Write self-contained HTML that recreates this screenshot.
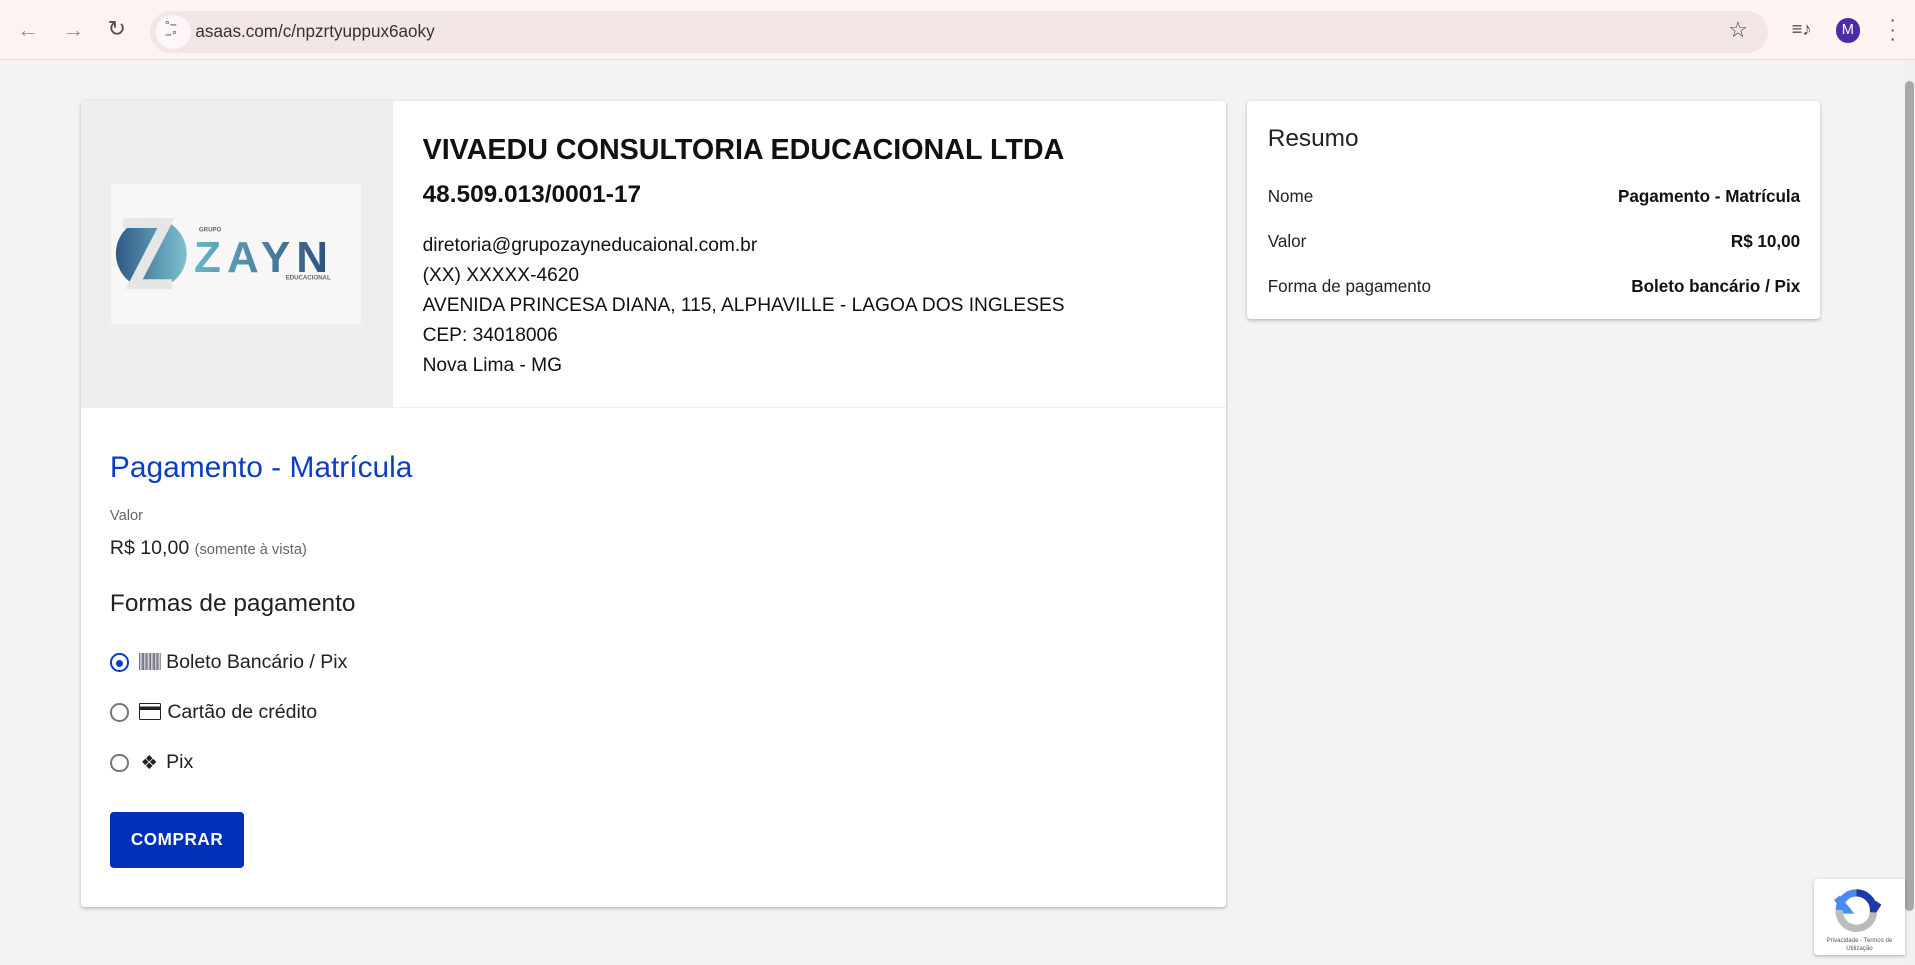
<!DOCTYPE html>
<html><head><meta charset="utf-8"><style>
html,body{margin:0;padding:0;width:1915px;height:965px;overflow:hidden;background:#f3f3f3}
#w{zoom:1.2213;width:1568px;height:790px;position:relative;font-family:"Liberation Sans",sans-serif;color:#222}
.a{position:absolute}
.top{left:0;top:0;width:1568px;height:48px;background:#fdf4f2;border-bottom:1px solid #f4ddd6}
.url{left:123px;top:9px;width:1325px;height:34px;border-radius:17px;background:#f3e6e6}
.card{background:#fff;box-shadow:0 1px 3px rgba(0,0,0,.25);border-radius:3px}
.t{white-space:nowrap}
</style></head><body><div id="w">
<div class="a" style="left:0;top:0;width:1568px;height:4px;background:#fbdcd3"></div>
<div class="a top"></div>
<div class="a" style="left:14px;top:14px;color:#a09090;font-size:18px">&#8592;</div>
<div class="a" style="left:51px;top:14px;color:#a09090;font-size:18px">&#8594;</div>
<div class="a" style="left:88px;top:13px;color:#5a4a4a;font-size:18px">&#8635;</div>
<div class="a url"></div>
<div class="a" style="left:128px;top:12px;width:28px;height:28px;border-radius:14px;background:#fdf8f7"></div>
<div class="a t" style="left:135px;top:17px;font-size:10px;color:#444;line-height:8px">°−<br>−°</div>
<div class="a t" style="left:160px;top:18px;font-size:14px;color:#333">asaas.com/c/npzrtyuppux6aoky</div>
<div class="a" style="left:1415px;top:14px;font-size:18px;color:#444">☆</div>
<div class="a" style="left:1467px;top:15px;font-size:15px;color:#5a4a4a">≡♪</div>
<div class="a" style="left:1503px;top:15px;width:20px;height:20px;border-radius:10px;background:#4b2ba8;color:#fff;font-size:12px;text-align:center;line-height:20px">M</div>
<div class="a" style="left:1547px;top:13px;font-size:16px;color:#5a4a4a;line-height:8px">·<br>·<br>·</div>
<div class="a" style="left:1558px;top:49px;width:10px;height:741px;background:#f1f1f1"></div>
<div class="a" style="left:1560px;top:66px;width:7px;height:680px;border-radius:4px;background:#a8a8a8"></div>

<div class="a card" style="left:66px;top:83px;width:938px;height:660px"></div>
<div class="a" style="left:66px;top:83px;width:256px;height:250px;background:#eeeeee"></div>
<div class="a" style="left:66px;top:333px;width:938px;height:1px;background:#f0f0f0"></div>
<div class="a" style="left:91px;top:151px;width:205px;height:114px;background:#f7f7f7"></div>
<svg class="a" style="left:91px;top:151px" width="205" height="114">
<defs><linearGradient id="g" x1="0" x2="1"><stop offset="0" stop-color="#2d5a86"/><stop offset="1" stop-color="#7fc1d0"/></linearGradient>
<linearGradient id="h" x1="0" x2="1"><stop offset="0" stop-color="#6ab4c8"/><stop offset="1" stop-color="#2b4e7a"/></linearGradient></defs>
<circle cx="33" cy="57" r="29" fill="url(#g)"/>
<path d="M10 28 H52 L26 78 H50 V86 H12 L38 36 H10Z" fill="#e6e6e6"/>
<text x="72" y="39" font-size="5" fill="#666" font-family="Liberation Sans" font-weight="bold">GRUPO</text>
<text x="68" y="72" font-size="36" fill="url(#h)" font-family="Liberation Sans" font-weight="bold" letter-spacing="5">ZAYN</text>
<text x="143" y="78" font-size="5" fill="#666" font-family="Liberation Sans" font-weight="bold">EDUCACIONAL</text>
</svg>
<div class="a t" style="left:346px;top:110px;font-size:23.5px;font-weight:bold;color:#111">VIVAEDU CONSULTORIA EDUCACIONAL LTDA</div>
<div class="a t" style="left:346px;top:148px;font-size:20px;font-weight:bold;color:#111">48.509.013/0001-17</div>
<div class="a t" style="left:346px;top:189px;font-size:15.7px;line-height:24.6px;color:#111">diretoria@grupozayneducaional.com.br<br>(XX) XXXXX-4620<br>AVENIDA PRINCESA DIANA, 115, ALPHAVILLE - LAGOA DOS INGLESES<br>CEP: 34018006<br>Nova Lima - MG</div>

<div class="a t" style="left:90px;top:369px;font-size:24.5px;color:#0b3fc1">Pagamento - Matrícula</div>
<div class="a t" style="left:90px;top:416px;font-size:12px;color:#666">Valor</div>
<div class="a t" style="left:90px;top:440px;font-size:16px;color:#222">R$ 10,00 <span style="font-size:12px;color:#666">(somente à vista)</span></div>
<div class="a t" style="left:90px;top:483px;font-size:20px;color:#222">Formas de pagamento</div>

<div class="a" style="left:90px;top:535px;width:12px;height:12px;border:2px solid #0b3fc1;border-radius:50%"></div>
<div class="a" style="left:95px;top:540px;width:6px;height:6px;background:#0b3fc1;border-radius:50%"></div>
<div class="a" style="left:90px;top:576px;width:12px;height:12px;border:2px solid #777;border-radius:50%"></div>
<div class="a" style="left:90px;top:617px;width:12px;height:12px;border:2px solid #777;border-radius:50%"></div>
<div class="a" style="left:114px;top:535px;width:18px;height:14px;background:repeating-linear-gradient(90deg,#777 0 1px,#ccd 1px 2px,#99a 2px 3px)"></div>
<div class="a t" style="left:136px;top:533px;font-size:16px;color:#222">Boleto Bancário / Pix</div>
<div class="a" style="left:114px;top:576px;width:16px;height:12px;border:1.5px solid #222;border-radius:1px;background:linear-gradient(#fff 0 2px,#222 2px 5px,#fff 5px)"></div>
<div class="a t" style="left:137px;top:574px;font-size:16px;color:#222">Cartão de crédito</div>
<div class="a" style="left:115px;top:615px;font-size:16px;color:#222">❖</div>
<div class="a t" style="left:136px;top:615px;font-size:16px;color:#222">Pix</div>
<div class="a" style="left:90px;top:665px;width:110px;height:46px;background:#0030b9;border-radius:3px;color:#fff;font-weight:bold;font-size:14px;text-align:center;line-height:46px;letter-spacing:.5px">COMPRAR</div>

<div class="a card" style="left:1021px;top:83px;width:469px;height:178px"></div>
<div class="a t" style="left:1038px;top:102px;font-size:20px;color:#222">Resumo</div>
<div class="a t" style="left:1038px;top:153px;font-size:14px;color:#222">Nome</div>
<div class="a t" style="left:1038px;top:190px;font-size:14px;color:#222">Valor</div>
<div class="a t" style="left:1038px;top:227px;font-size:14px;color:#222">Forma de pagamento</div>
<div class="a t" style="right:94px;top:153px;font-size:14px;font-weight:bold;color:#111">Pagamento - Matrícula</div>
<div class="a t" style="right:94px;top:190px;font-size:14px;font-weight:bold;color:#111">R$ 10,00</div>
<div class="a t" style="right:94px;top:227px;font-size:14px;font-weight:bold;color:#111">Boleto bancário / Pix</div>

<div class="a card" style="left:1485px;top:720px;width:75px;height:62px;border-radius:3px 0 0 3px"></div>
<svg class="a" style="left:1500px;top:727px" width="40" height="38"><path d="M20 4 A14 14 0 0 0 6 18 H12 L4 8" fill="none" stroke="#4a8af4" stroke-width="6"/><path d="M20 4 A14 14 0 0 1 34 18 L38 12" fill="none" stroke="#1c3aa9" stroke-width="6"/><path d="M6 18 A14 14 0 0 0 34 20" fill="none" stroke="#bbb" stroke-width="6"/></svg>
<div class="a" style="left:1490px;top:767px;width:65px;font-size:5px;color:#555;text-align:center;line-height:7px">Privacidade - Termos de Utilização</div>
</div></body></html>
